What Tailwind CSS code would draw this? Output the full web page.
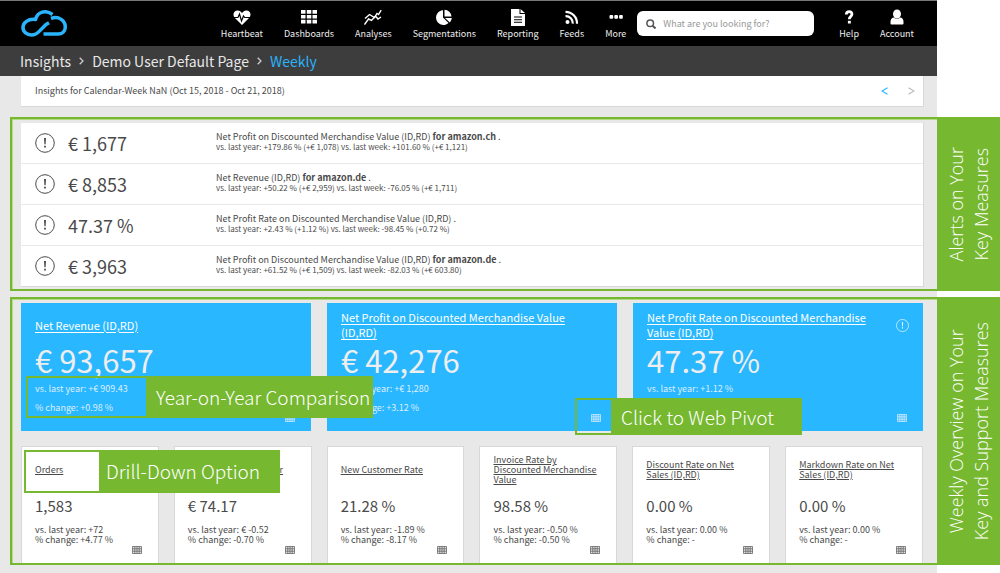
<!DOCTYPE html>
<html lang="en">
<head>
<meta charset="utf-8">
<title>Insights - Weekly</title>
<script src="https://cdn.jsdelivr.net/npm/@tailwindcss/browser@4"></script>
</head>
<body class="min-h-screen font-['Noto_Sans_CJK_SC',sans-serif] text-[#4a4a4a] bg-[linear-gradient(to_left,#fff_63px,#e8e8e8_63px)]">
<svg class="hidden" aria-hidden="true">
  <symbol id="grid" viewBox="0 0 10 8"><path d="M.5.500h9v7h-9z" fill="currentColor" fill-opacity=".15"/><path d="M.5.500h9v7h-9zM2.800.500v7M5 .500v7M7.200.500v7M.5 2.800h9M.5 5.200h9" fill="none" stroke="currentColor" stroke-width=".7"/></symbol>
  <symbol id="alert" viewBox="0 0 20 20"><circle cx="10" cy="10" r="9.3" fill="none" stroke="currentColor"/><path d="M9 5h2l-.4 6.2H9.4zM9.1 12.7h1.8v1.8H9.1z" fill="currentColor"/></symbol>
</svg>

<header class="mr-[63px]">
  <div class="flex h-[46px] items-start border-t border-[#777] bg-black pr-[23px] pl-[21px] text-[#eee]">
    <a href="#" aria-label="Home" class="mt-[9px]"><svg class="h-[27px] w-[46px]" viewBox="0 0 46 27" fill="none" stroke="#29b4fd" stroke-width="3.500" stroke-linejoin="round"><path d="M31.5 4.500C25-.5 16.500 1.500 14.500 9.500 7 8.500 2 13 2 17.500c0 4.500 4 7.500 8.500 7.500 5 0 7-3 9.500-5.500l5-5 3-1.800"/><path d="M30 8.500c8-3 14.300 2.500 14.300 8.500 0 4.500-3.300 7-7.300 7H22.500"/></svg></a>
    <nav class="ml-auto flex gap-[21px] pt-[8px] text-[9px] leading-[14px]">
      <a href="#" class="flex flex-col items-center gap-px"><svg class="h-[17px] w-[18px]" viewBox="0 0 18 17"><path d="M9 16 1.500 8.500C-.8 5.500 1 1.500 4.500 1.500 7 1.500 8.400 3 9 4.200 9.600 3 11 1.500 13.500 1.500 17 1.500 18.800 5.500 16.500 8.500z" fill="#fff"/><path d="M1 8.500h4l1.500-3.500 2 7 2-5 1.200 1.500H17" fill="none" stroke="#000" stroke-width="1.200"/></svg>Heartbeat</a>
      <a href="#" class="flex flex-col items-center gap-px"><svg class="h-[17px] w-[18px]" viewBox="0 0 18 17" fill="#fff"><path d="M1 1h4.500v3.700H1zM6.800 1h4.500v3.700H6.800zM12.500 1H17v3.700h-4.500zM1 6h4.500v3.500H1zM6.800 6h4.500v3.500H6.800zM12.500 6H17v3.500h-4.500zM1 10.800h4.500v3.700H1zM6.800 10.800h4.500v3.700H6.800zM12.500 10.800H17v3.700h-4.500z"/></svg>Dashboards</a>
      <a href="#" class="flex flex-col items-center gap-px"><svg class="h-[17px] w-[18px]" viewBox="0 0 18 17" fill="none" stroke="#fff" stroke-width="1.400"><path d="m.5 15.500 4-5.500 3 1.500 4-4.500 2.500 3 3-2"/><path d="m1 9.500 4.500-4 5 3 2.500-4 1.500 1L17.200 1.200"/></svg>Analyses</a>
      <a href="#" class="flex flex-col items-center gap-px"><svg class="h-[17px] w-[18px]" viewBox="0 0 18 17" fill="#fff"><path d="M8 1.200A7.400 7.400 0 1 0 13.500 14L8 8.500z"/><path d="M9.500.8V7.500h7A7.200 7.200 0 0 0 9.500.8zM10 9h6.800a7 7 0 0 1-2 4.500z"/></svg>Segmentations</a>
      <a href="#" class="flex flex-col items-center gap-px"><svg class="h-[17px] w-[18px]" viewBox="0 0 18 17"><path d="M2 0h8.500v5H16v12H2z" fill="#fff"/><path d="M11.500 0 16 4h-4.500z" fill="#fff"/><path d="M5 8h8M5 10.700h8M5 13.300h8" stroke="#000" stroke-width="1.100"/></svg>Reporting</a>
      <a href="#" class="flex flex-col items-center gap-px"><svg class="h-[17px] w-[18px]" viewBox="0 0 18 17" fill="none" stroke="#fff" stroke-width="2.200"><circle cx="4.500" cy="13" r="2" fill="#fff" stroke="none"/><path d="M2.500 7.200a7 7 0 0 1 7.300 7.500M2.500 2.800A11.500 11.500 0 0 1 14 14.700"/></svg>Feeds</a>
      <a href="#" class="flex flex-col items-center gap-px"><svg class="h-[17px] w-[18px]" viewBox="0 0 18 17" fill="#fff"><rect x="2.500" y="6" width="3.700" height="3.700" rx="1"/><rect x="7.300" y="6" width="3.700" height="3.700" rx="1"/><rect x="12.100" y="6" width="3.700" height="3.700" rx="1"/></svg>More</a>
    </nav>
    <label class="mt-[10px] ml-[11px] flex h-[25px] w-[177px] items-center gap-[7px] rounded-[6px] bg-white pl-[9px]">
      <svg class="size-[10px] shrink-0" viewBox="0 0 10 10" fill="none" stroke="#555" stroke-width="1.500"><circle cx="4.200" cy="4.200" r="3.300"/><path d="m6.700 6.700 2.800 2.800" stroke-width="2"/></svg>
      <input type="search" aria-label="Search" placeholder="What are you looking for?" class="min-w-0 flex-1 text-[9px] text-[#444] outline-none placeholder:text-[#999]">
    </label>
    <nav class="ml-[25px] flex gap-[21px] pt-[8px] text-[9px] leading-[14px]">
      <a href="#" class="flex flex-col items-center gap-px"><svg class="h-[17px] w-[18px]" viewBox="0 0 18 17"><path d="M6.300 5.500C6.500 1.500 12.300 2 11.900 5.300 11.700 7.500 9.300 7.500 9.300 10.300" fill="none" stroke="#fff" stroke-width="2.800"/><path d="M7.900 11.800h2.900v2.700H7.900z" fill="#fff"/></svg>Help</a>
      <a href="#" class="flex flex-col items-center gap-px"><svg class="h-[17px] w-[18px]" viewBox="0 0 18 17" fill="#fff"><ellipse cx="9" cy="5" rx="4" ry="4.500"/><path d="M5.500 8.500Q9 11 12.500 8.500 15.500 9 15.500 13v1.500q0 1-1 1h-11q-1 0-1-1V13q0-4 3-4.500z"/></svg>Account</a>
    </nav>
  </div>
  <nav aria-label="Breadcrumb" class="flex h-[30px] items-center gap-[8px] bg-[#3d3d3d] pl-[20px] text-[14px] leading-[20px] text-[#e8e8e8]">
    <a href="#">Insights</a>
    <svg class="h-[8px] w-[5px]" viewBox="0 0 5 8" fill="none" stroke="#ccc" stroke-width="1.300"><path d="m.7.700 3.300 3.300L.7 7.300"/></svg>
    <a href="#">Demo User Default Page</a>
    <svg class="h-[8px] w-[5px]" viewBox="0 0 5 8" fill="none" stroke="#ccc" stroke-width="1.300"><path d="m.7.700 3.300 3.300L.7 7.300"/></svg>
    <a href="#" class="text-[#29b4fd]">Weekly</a>
  </nav>
</header>

<main>
  <div class="mr-[76px] ml-[21px] flex h-[31px] items-center border-r border-b border-[#d8d8d8] bg-white pr-[8px] pl-[14px] text-[9px]">
    <h1 class="leading-[14px]">Insights for Calendar-Week NaN (Oct 15, 2018 - Oct 21, 2018)</h1>
    <button aria-label="Previous week" class="ml-auto"><svg class="h-[8px] w-[7px]" viewBox="0 0 7 8" fill="none" stroke="#29b4fd" stroke-width="1.200"><path d="M6.500.800 1 4l5.500 3.200"/></svg></button>
    <button aria-label="Next week" class="ml-[20px]"><svg class="h-[8px] w-[7px]" viewBox="0 0 7 8" fill="none" stroke="#bbb" stroke-width="1.200"><path d="M.500.800 6 4 .500 7.200"/></svg></button>
  </div>

  <section class="mt-[10px] ml-[10px] flex h-[174px]">
    <div class="min-w-0 flex-1 border-2 border-r-0 border-[#76b82f] pt-[4px] pr-[13px] pl-[9px] shadow-[inset_1px_1px_0_#b4da85]">
      <ul class="divide-y divide-[#e8e8e8] border border-t-0 border-l-0 border-[#d8d8d8] bg-white">
        <li class="flex h-[41px] items-center pl-[14px]"><svg class="size-[20px]"><use href="#alert"/></svg><strong class="ml-[13px] w-[148px] text-[18px] leading-[24px] font-normal">€ 1,677</strong><div class="-mt-[4px]"><p class="text-[9px] leading-[11px]">Net Profit on Discounted Merchandise Value (ID,RD) <b>for amazon.ch</b> .</p><p class="text-[8px] leading-[10px]">vs. last year: +179.86 % (+€ 1,078) vs. last week: +101.60 % (+€ 1,121)</p></div></li>
        <li class="flex h-[41px] items-center pl-[14px]"><svg class="size-[20px]"><use href="#alert"/></svg><strong class="ml-[13px] w-[148px] text-[18px] leading-[24px] font-normal">€ 8,853</strong><div class="-mt-[4px]"><p class="text-[9px] leading-[11px]">Net Revenue (ID,RD) <b>for amazon.de</b> .</p><p class="text-[8px] leading-[10px]">vs. last year: +50.22 % (+€ 2,959) vs. last week: -76.05 % (+€ 1,711)</p></div></li>
        <li class="flex h-[41px] items-center pl-[14px]"><svg class="size-[20px]"><use href="#alert"/></svg><strong class="ml-[13px] w-[148px] text-[18px] leading-[24px] font-normal">47.37 %</strong><div class="-mt-[4px]"><p class="text-[9px] leading-[11px]">Net Profit Rate on Discounted Merchandise Value (ID,RD) .</p><p class="text-[8px] leading-[10px]">vs. last year: +2.43 % (+1.12 %) vs. last week: -98.45 % (+0.72 %)</p></div></li>
        <li class="flex h-[40px] items-center pl-[14px]"><svg class="size-[20px]"><use href="#alert"/></svg><strong class="ml-[13px] w-[148px] text-[18px] leading-[24px] font-normal">€ 3,963</strong><div class="-mt-[4px]"><p class="text-[9px] leading-[11px]">Net Profit on Discounted Merchandise Value (ID,RD) <b>for amazon.de</b> .</p><p class="text-[8px] leading-[10px]">vs. last year: +61.52 % (+€ 1,509) vs. last week: -82.03 % (+€ 603.80)</p></div></li>
      </ul>
    </div>
    <h2 class="flex w-[63px] items-center justify-center bg-[#76b82f] font-['Open_Sans',sans-serif] text-[18px] leading-[25px] font-light text-white"><span class="rotate-180 text-center [writing-mode:vertical-rl]">Alerts on Your<br>Key Measures</span></h2>
  </section>

  <section class="mt-[6px] ml-[10px] flex h-[268px]">
    <div class="min-w-0 flex-1 border-2 border-r-0 border-[#76b82f] pt-[4px] pr-[14px] pl-[9px] shadow-[inset_1px_1px_0_#b4da85]">
      <div class="grid grid-cols-3 gap-[16px] text-white">
        <article class="relative h-[128px] bg-[#29b7ff] px-[14px]">
          <h3 class="flex h-[44px] items-center text-[11px] leading-[15px]"><a href="#" class="underline underline-offset-2">Net Revenue (ID,RD)</a></h3>
          <p class="text-[31px] leading-[26px] text-[#eee]">€ 93,657</p>
          <p class="pt-[6px] text-[9px] leading-[19px] text-[#def]">vs. last year: +€ 909.43<br>% change: +0.98 %</p>
          <svg class="absolute right-[16px] bottom-[9px] h-[8px] w-[10px] text-[#def]"><use href="#grid"/></svg>
          <div class="absolute top-[73px] left-[5px] z-10 flex h-[42px] w-[347px]"><span class="w-[120px] border-2 border-r-0 border-[#76b82f]"></span><span class="flex flex-1 items-center bg-[#76b82f] pb-px pl-[10px] text-[19px] leading-[24px] font-light whitespace-nowrap">Year-on-Year Comparison</span></div>
        </article>
        <article class="relative h-[128px] bg-[#29b7ff] px-[14px]">
          <h3 class="flex h-[44px] items-center pr-[20px] text-[11px] leading-[15px]"><a href="#" class="underline underline-offset-2">Net Profit on Discounted Merchandise Value (ID,RD)</a></h3>
          <p class="text-[31px] leading-[26px] text-[#eee]">€ 42,276</p>
          <p class="pt-[6px] text-[9px] leading-[19px] text-[#def]">vs. last year: +€ 1,280<br>% change: +3.12 %</p>
          <svg class="absolute right-[16px] bottom-[9px] h-[8px] w-[10px] text-[#def]"><use href="#grid"/></svg>
          <div class="absolute top-[95px] right-[-185px] z-10 flex h-[37px] w-[227px]"><span class="w-[36px] border-2 border-r-0 border-[#76b82f]"></span><span class="flex flex-1 items-center bg-[#76b82f] pl-[10px] text-[19px] leading-[24px] font-light whitespace-nowrap">Click to Web Pivot</span></div>
        </article>
        <article class="relative h-[128px] bg-[#29b7ff] px-[14px]">
          <h3 class="flex h-[44px] items-center pr-[30px] text-[11px] leading-[15px]"><a href="#" class="underline underline-offset-2">Net Profit Rate on Discounted Merchandise Value (ID,RD)</a></h3>
          <svg class="absolute top-[16px] right-[14px] size-[13px]"><use href="#alert"/></svg>
          <p class="text-[31px] leading-[26px] text-[#eee]">47.37 %</p>
          <p class="pt-[6px] text-[9px] leading-[19px] text-[#def]">vs. last year: +1.12 %</p>
          <svg class="absolute right-[16px] bottom-[9px] h-[8px] w-[10px] text-[#def]"><use href="#grid"/></svg>
        </article>
      </div>
      <div class="mt-[15px] grid grid-cols-6 gap-[15px] text-[9px] leading-[10px]">
        <article class="relative h-[117px] border border-b-0 border-[#d8d8d8] bg-white pl-[13px]">
          <h3 class="flex h-[46px] items-center"><a href="#" class="underline">Orders</a></h3>
          <p class="pt-[4px] text-[15px] leading-[18px]">1,583</p>
          <p class="pt-[10px]">vs. last year: +72<br>% change: +4.77 %</p>
          <svg class="absolute right-[16px] bottom-[9px] h-[8px] w-[10px] text-[#555]"><use href="#grid"/></svg>
          <div class="absolute top-[3px] left-[2px] z-10 flex h-[43px] w-[256px]"><span class="w-[75px] border-2 border-r-0 border-[#76b82f]"></span><span class="flex flex-1 items-center bg-[#76b82f] pb-[2px] pl-[7px] text-[19px] leading-[24px] font-light whitespace-nowrap text-white">Drill-Down Option</span></div>
        </article>
        <article class="relative h-[117px] border border-b-0 border-[#d8d8d8] bg-white pl-[13px]">
          <h3 class="flex h-[46px] items-center"><a href="#" class="underline">Net Revenue per Order</a></h3>
          <p class="pt-[4px] text-[15px] leading-[18px]">€ 74.17</p>
          <p class="pt-[10px]">vs. last year: € -0.52<br>% change: -0.70 %</p>
          <svg class="absolute right-[16px] bottom-[9px] h-[8px] w-[10px] text-[#555]"><use href="#grid"/></svg>
        </article>
        <article class="relative h-[117px] border border-b-0 border-[#d8d8d8] bg-white pl-[13px]">
          <h3 class="flex h-[46px] items-center"><a href="#" class="underline">New Customer Rate</a></h3>
          <p class="pt-[4px] text-[15px] leading-[18px]">21.28 %</p>
          <p class="pt-[10px]">vs. last year: -1.89 %<br>% change: -8.17 %</p>
          <svg class="absolute right-[16px] bottom-[9px] h-[8px] w-[10px] text-[#555]"><use href="#grid"/></svg>
        </article>
        <article class="relative h-[117px] border border-b-0 border-[#d8d8d8] bg-white pl-[13px]">
          <h3 class="flex h-[46px] items-center pr-[15px]"><a href="#" class="underline">Invoice Rate by Discounted Merchandise Value</a></h3>
          <p class="pt-[4px] text-[15px] leading-[18px]">98.58 %</p>
          <p class="pt-[10px]">vs. last year: -0.50 %<br>% change: -0.50 %</p>
          <svg class="absolute right-[16px] bottom-[9px] h-[8px] w-[10px] text-[#555]"><use href="#grid"/></svg>
        </article>
        <article class="relative h-[117px] border border-b-0 border-[#d8d8d8] bg-white pl-[13px]">
          <h3 class="flex h-[46px] items-center pr-[24px]"><a href="#" class="underline">Discount Rate on Net Sales (ID,RD)</a></h3>
          <p class="pt-[4px] text-[15px] leading-[18px]">0.00 %</p>
          <p class="pt-[10px]">vs. last year: 0.00 %<br>% change: -</p>
          <svg class="absolute right-[16px] bottom-[9px] h-[8px] w-[10px] text-[#555]"><use href="#grid"/></svg>
        </article>
        <article class="relative h-[117px] border border-b-0 border-[#d8d8d8] bg-white pl-[13px]">
          <h3 class="flex h-[46px] items-center pr-[24px]"><a href="#" class="underline">Markdown Rate on Net Sales (ID,RD)</a></h3>
          <p class="pt-[4px] text-[15px] leading-[18px]">0.00 %</p>
          <p class="pt-[10px]">vs. last year: 0.00 %<br>% change: -</p>
          <svg class="absolute right-[16px] bottom-[9px] h-[8px] w-[10px] text-[#555]"><use href="#grid"/></svg>
        </article>
      </div>
    </div>
    <h2 class="flex w-[63px] items-center justify-center bg-[#76b82f] font-['Open_Sans',sans-serif] text-[18px] leading-[25px] font-light text-white"><span class="rotate-180 text-center [writing-mode:vertical-rl]">Weekly Overview on Your<br>Key and Support Measures</span></h2>
  </section>
</main>
</body>
</html>
